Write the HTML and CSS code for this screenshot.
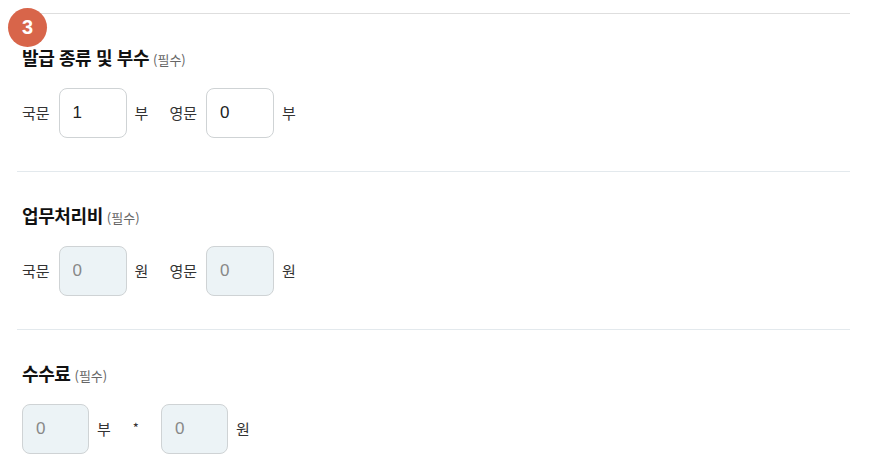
FILE: index.html
```html
<!DOCTYPE html>
<html lang="ko">
<head>
<meta charset="utf-8">
<link rel="stylesheet" href="styles.css">
</head>
<body>
<div class="form">
  <span class="badge">3</span>
  <section class="section first">
    <h3 class="title">발급 종류 및 부수 <small>(필수)</small></h3>
    <div class="row">
      <div class="group"><span class="lbl lead">국문</span><input class="box" type="text" value="1"><span class="lbl">부</span></div>
      <div class="group"><span class="lbl lead">영문</span><input class="box" type="text" value="0"><span class="lbl">부</span></div>
    </div>
  </section>
  <section class="section">
    <h3 class="title">업무처리비 <small>(필수)</small></h3>
    <div class="row">
      <div class="group"><span class="lbl lead">국문</span><input class="box" type="text" value="0" disabled><span class="lbl">원</span></div>
      <div class="group"><span class="lbl lead">영문</span><input class="box" type="text" value="0" disabled><span class="lbl">원</span></div>
    </div>
  </section>
  <section class="section">
    <h3 class="title">수수료 <small>(필수)</small></h3>
    <div class="row fee">
      <div class="group"><input class="box" type="text" value="0" disabled><span class="lbl">부</span></div>
      <span class="star">*</span>
      <div class="group"><input class="box" type="text" value="0" disabled><span class="lbl">원</span></div>
    </div>
  </section>
</div>
</body>
</html>
```
FILE: styles.css
```css
html, body {
  margin: 0;
  padding: 0;
  background: #fff;
}
body {
  font-family: "Noto Sans CJK KR", "Noto Sans", sans-serif;
  color: #222;
}
.form {
  position: relative;
  width: 833px;
  margin-left: 17px;
  padding-top: 13px;
}
.badge {
  position: absolute;
  left: -9px;
  top: 8px;
  width: 39px;
  height: 39px;
  border-radius: 50%;
  background: #d8654a;
  color: #fff;
  font-family: "Liberation Sans", Arial, sans-serif;
  font-weight: bold;
  font-size: 20px;
  line-height: 38px;
  text-align: center;
}
.section {
  border-top: 1px solid #e3e9ed;
  padding: 33px 0 33px 5px;
}
.section.first {
  border-top-color: #dedede;
}
.title {
  display: flex;
  align-items: baseline;
  gap: 4px;
  height: 21px;
  margin: 0 0 20px;
  font-size: 18px;
  line-height: 21px;
  font-weight: bold;
  color: #111;
  letter-spacing: -0.4px;
}
.title small {
  font-size: 13px;
  line-height: 1;
  font-weight: normal;
  color: #666;
  letter-spacing: 0;
}
.row {
  display: flex;
  align-items: center;
  gap: 21px;
}
.group {
  display: flex;
  align-items: center;
  gap: 8px;
}
.lbl {
  font-size: 15px;
  color: #333;
  line-height: 20px;
}
.lbl.lead {
  margin-right: 1px;
}
.box {
  box-sizing: border-box;
  width: 68px;
  height: 50px;
  border: 1px solid #cfd3d5;
  border-radius: 8px;
  background: #fff;
  padding: 0 13px;
  font-family: "Liberation Sans", Arial, sans-serif;
  font-size: 17px;
  color: #222;
  outline: none;
}
.box:disabled {
  background: #ecf3f6;
  color: #888;
}
.fee .box {
  width: 67px;
}
.fee {
  gap: 22px;
}
.star {
  font-size: 13px;
  color: #333;
  margin-top: -4px;
}
```
